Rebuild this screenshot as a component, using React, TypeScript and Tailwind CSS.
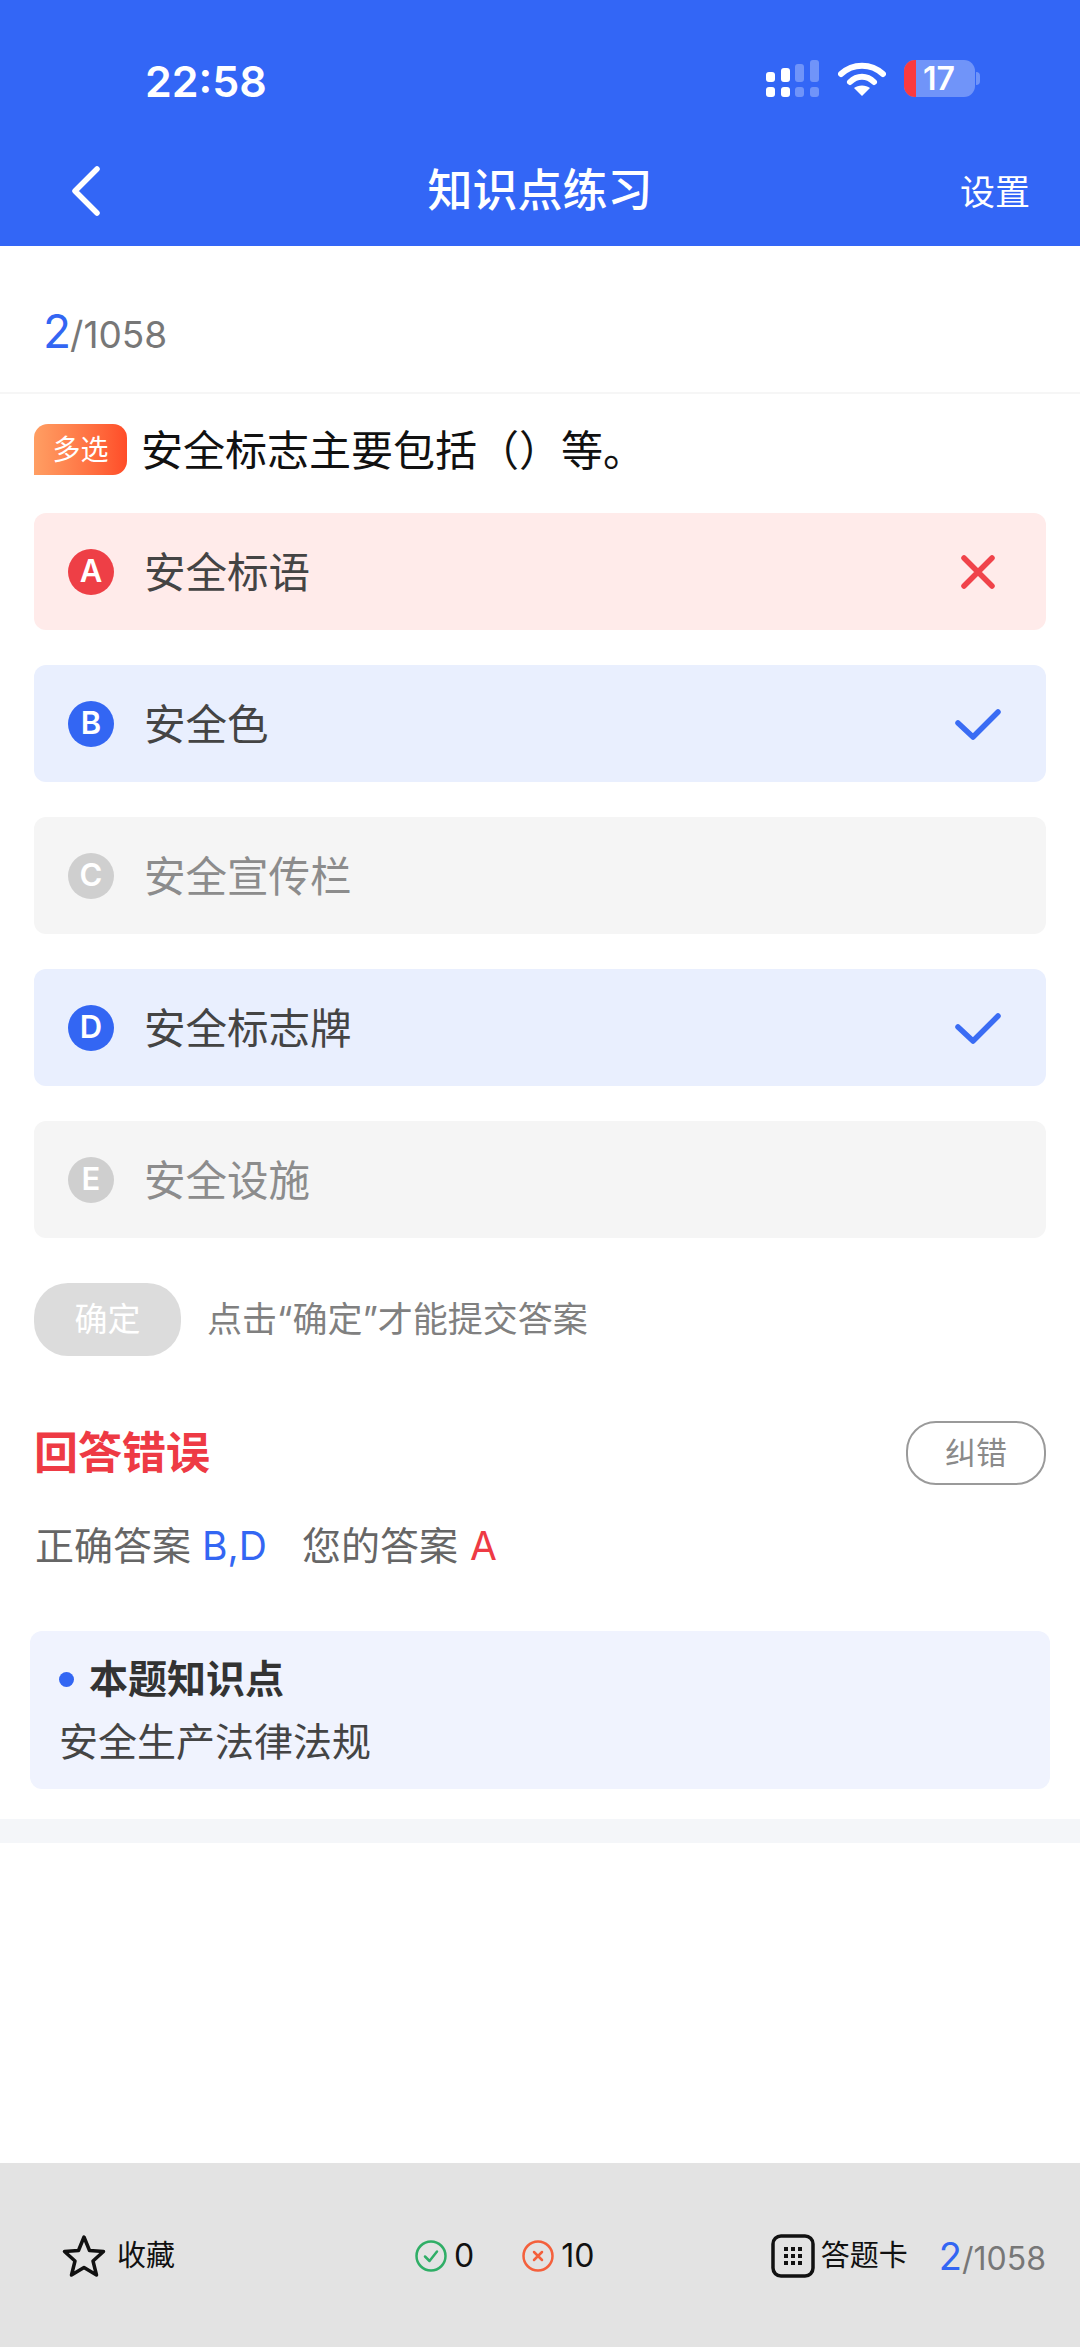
import React from 'react';

const options = [
  { key: 'A', text: '安全标语', state: 'wrong' },
  { key: 'B', text: '安全色', state: 'right' },
  { key: 'C', text: '安全宣传栏', state: 'none' },
  { key: 'D', text: '安全标志牌', state: 'right' },
  { key: 'E', text: '安全设施', state: 'none' },
];

const rowStyles: Record<string, { row: string; dot: string; label: string }> = {
  wrong: { row: 'bg-[#ffebea]', dot: 'bg-[#ee3f46]', label: 'text-[#444444]' },
  right: { row: 'bg-[#e9effe]', dot: 'bg-[#3366f3]', label: 'text-[#444444]' },
  none: { row: 'bg-[#f5f5f5]', dot: 'bg-[#cfcfcf]', label: 'text-[#8c8c8c]' },
};

function Signal() {
  return (
    <svg width="54" height="37" viewBox="0 0 54 37">
      <g fill="#fff">
        <rect x="0" y="12" width="9" height="10" rx="3" />
        <rect x="15" y="8" width="9" height="14" rx="3" />
        <rect x="0" y="27" width="9" height="10" rx="3" />
        <rect x="15" y="27" width="9" height="10" rx="3" />
      </g>
      <g fill="#fff" fillOpacity="0.3">
        <rect x="29" y="4" width="9" height="18" rx="3" />
        <rect x="44" y="0" width="9" height="22" rx="3" />
        <rect x="29" y="27" width="9" height="10" rx="3" />
        <rect x="44" y="27" width="9" height="10" rx="3" />
      </g>
    </svg>
  );
}

function Wifi() {
  return (
    <svg width="48" height="35" viewBox="0 0 48 35" fill="none">
      <path d="M3 13C15 2 33 2 45 13" stroke="#fff" strokeWidth="6" strokeLinecap="round" />
      <path d="M12 21C19 14 29 14 36 21" stroke="#fff" strokeWidth="6" strokeLinecap="round" />
      <path d="M24 35L16 27C20 23.500 28 23.500 32 27Z" fill="#fff" />
    </svg>
  );
}

function Battery() {
  return (
    <div className="flex items-center">
      <div className="flex h-[37px] w-[71px] overflow-hidden rounded-[11px] bg-white/30">
        <div className="w-[12px] bg-[#fb3a3f]" />
        <div className="flex-1 pr-[13px] text-center text-[32px] font-semibold leading-[37px] text-white">17</div>
      </div>
      <div className="ml-[1px] h-[13px] w-[4px] rounded-r-full bg-white/30" />
    </div>
  );
}

export default function App() {
  return (
    <div
      className="flex h-[2347px] w-[1080px] flex-col overflow-hidden bg-white"
      style={{ fontFamily: 'Inter, "Noto Sans CJK SC", sans-serif' }}
    >
      {/* Header */}
      <div className="h-[246px] bg-[#3366f6] text-white">
        <div className="flex h-[135px] items-end justify-between pb-[34px] pl-[145px] pr-[100px]">
          <div className="text-[43px] font-semibold leading-[40px]">22:58</div>
          <div className="mb-[4px] flex items-center gap-[18px]">
            <Signal />
            <Wifi />
            <Battery />
          </div>
        </div>
        <div className="flex h-[111px] items-center justify-between pl-[70px] pr-[50px]">
          <div className="w-[70px]">
            <svg width="32" height="50" viewBox="0 0 32 50" fill="none">
              <path d="M27 3L5 25L27 47" stroke="#fff" strokeWidth="5.500" strokeLinecap="round" strokeLinejoin="round" />
            </svg>
          </div>
          <div className="text-[45px] font-medium">知识点练习</div>
          <div className="mt-[4px] w-[90px] text-right text-[35px]">设置</div>
        </div>
      </div>

      {/* Counter */}
      <div className="flex h-[148px] items-center border-b-2 border-[#f6f6f6] pl-[43px] pt-[24px]">
        <div className="flex items-baseline">
          <span className="text-[46px] text-[#3366f3]">2</span>
          <span className="-ml-[1px] text-[37px] text-[#777777]">/1058</span>
        </div>
      </div>

      {/* Question */}
      <div className="mt-[30px] flex h-[51px] items-center px-[34px]">
        <div className="flex h-[51px] w-[93px] items-center justify-center rounded-t-[14px] rounded-br-[14px] bg-gradient-to-r from-[#ff9e63] to-[#ff4c28] text-[28px] text-white">
          多选
        </div>
        <div className="ml-[14px] pt-[2px] text-[42px] leading-[51px] text-[#111111]">安全标志主要包括（）等。</div>
      </div>

      {/* Options */}
      <div className="mt-[38px] flex flex-col gap-[35px] px-[34px]">
        {options.map((o) => {
          const s = rowStyles[o.state];
          return (
            <div key={o.key} className={`flex h-[117px] items-center rounded-[12px] pl-[34px] pr-[45px] ${s.row}`}>
              <div className={`flex h-[46px] w-[46px] items-center justify-center rounded-full text-[31px] font-semibold text-white ${s.dot}`}>
                {o.key}
              </div>
              <div className={`ml-[30px] flex-1 pt-[3px] text-[41.500px] ${s.label}`}>{o.text}</div>
              <div className="flex w-[46px] justify-center">
                {o.state === 'wrong' && (
                  <svg width="40" height="40" viewBox="0 0 40 40" fill="none">
                    <path d="M6 6L34 34M34 6L6 34" stroke="#f0434a" strokeWidth="5.500" strokeLinecap="round" />
                  </svg>
                )}
                {o.state === 'right' && (
                  <svg width="46" height="34" viewBox="0 0 46 34" fill="none">
                    <path d="M3 16L18 30L43 5" stroke="#3a6cf4" strokeWidth="5.500" strokeLinecap="round" strokeLinejoin="round" />
                  </svg>
                )}
              </div>
            </div>
          );
        })}
      </div>

      {/* Confirm */}
      <div className="mt-[45px] flex items-center px-[34px]">
        <div className="flex h-[73px] w-[147px] items-center justify-center rounded-[34px] bg-[#dcdcdc] text-[33px] text-white">
          确定
        </div>
        <div className="ml-[26px] text-[35px] text-[#808080]">点击“确定”才能提交答案</div>
      </div>

      {/* Result */}
      <div className="mt-[65px] flex h-[64px] items-center justify-between px-[34px]">
        <div className="text-[44px] font-bold text-[#ee3a44]">回答错误</div>
        <div className="flex h-[64px] w-[140px] items-center justify-center rounded-[30px] border-2 border-[#9a9a9a] text-[31px] text-[#8a8a8a]">
          纠错
        </div>
      </div>

      <div className="mt-[31px] flex h-[60px] items-center pl-[35px] text-[39px] text-[#666666]">
        <span>正确答案</span>
        <span className="ml-[11px] text-[#3366f3]">B,D</span>
        <span className="ml-[35px]">您的答案</span>
        <span className="ml-[12px] text-[#ee3a44]">A</span>
      </div>

      {/* Knowledge point */}
      <div className="mx-[30px] mt-[55px] h-[158px] rounded-[12px] bg-[#f0f3fe] pl-[29px] pt-[20px]">
        <div className="flex h-[56px] items-center">
          <div className="h-[15px] w-[15px] rounded-full bg-[#3366f3]" />
          <div className="ml-[15px] text-[39px] font-bold text-[#333333]">本题知识点</div>
        </div>
        <div className="mt-[7px] text-[39px] leading-[56px] text-[#444444]">安全生产法律法规</div>
      </div>

      <div className="mt-[30px] h-[24px] bg-[#f4f6f9]" />

      {/* Bottom bar */}
      <div className="mt-auto flex h-[184px] items-start justify-between bg-[#e3e3e3] pl-[62px] pr-[34px] pt-[71px]">
        <div className="flex h-[44px] w-[353px] items-center">
          <svg width="44" height="44" viewBox="0 0 44 44" fill="none">
            <path d="M22 3L27.500 16.500L41.500 17.500L31 27L34.500 41L22 33.500L9.500 41L13 27L2.500 17.500L16.500 16.500Z" stroke="#111" strokeWidth="3.500" strokeLinejoin="round" />
          </svg>
          <span className="ml-[11px] text-[29px] text-[#111111]">收藏</span>
        </div>
        <div className="flex h-[44px] items-center text-[32px] text-[#111111]">
          <svg width="32" height="32" viewBox="0 0 32 32" fill="none">
            <circle cx="16" cy="16" r="14.500" stroke="#2fae66" strokeWidth="2.500" />
            <path d="M10 16.500L14.500 21L22 11.500" stroke="#2fae66" strokeWidth="2.500" strokeLinecap="round" strokeLinejoin="round" />
          </svg>
          <span className="ml-[7px]">0</span>
          <svg className="ml-[48px]" width="32" height="32" viewBox="0 0 32 32" fill="none">
            <circle cx="16" cy="16" r="14.500" stroke="#f4603c" strokeWidth="2.500" />
            <path d="M12 12L20 20M20 12L12 20" stroke="#f4603c" strokeWidth="2.500" strokeLinecap="round" />
          </svg>
          <span className="ml-[7px]">10</span>
        </div>
        <div className="ml-auto flex h-[44px] items-center">
          <svg width="44" height="44" viewBox="0 0 44 44" fill="none">
            <rect x="2" y="2" width="40" height="40" rx="8" stroke="#111" strokeWidth="3.500" />
            <g fill="#111">
              <rect x="13" y="13" width="4" height="4" /><rect x="20" y="13" width="4" height="4" /><rect x="27" y="13" width="4" height="4" />
              <rect x="13" y="20" width="4" height="4" /><rect x="20" y="20" width="4" height="4" /><rect x="27" y="20" width="4" height="4" />
              <rect x="13" y="27" width="4" height="4" /><rect x="20" y="27" width="4" height="4" /><rect x="27" y="27" width="4" height="4" />
            </g>
          </svg>
          <span className="ml-[6px] text-[29px] text-[#111111]">答题卡</span>
          <div className="ml-[31px] flex items-baseline">
            <span className="text-[38px] text-[#3366f3]">2</span>
            <span className="text-[32px] text-[#777777]">/1058</span>
          </div>
        </div>
      </div>
    </div>
  );
}
